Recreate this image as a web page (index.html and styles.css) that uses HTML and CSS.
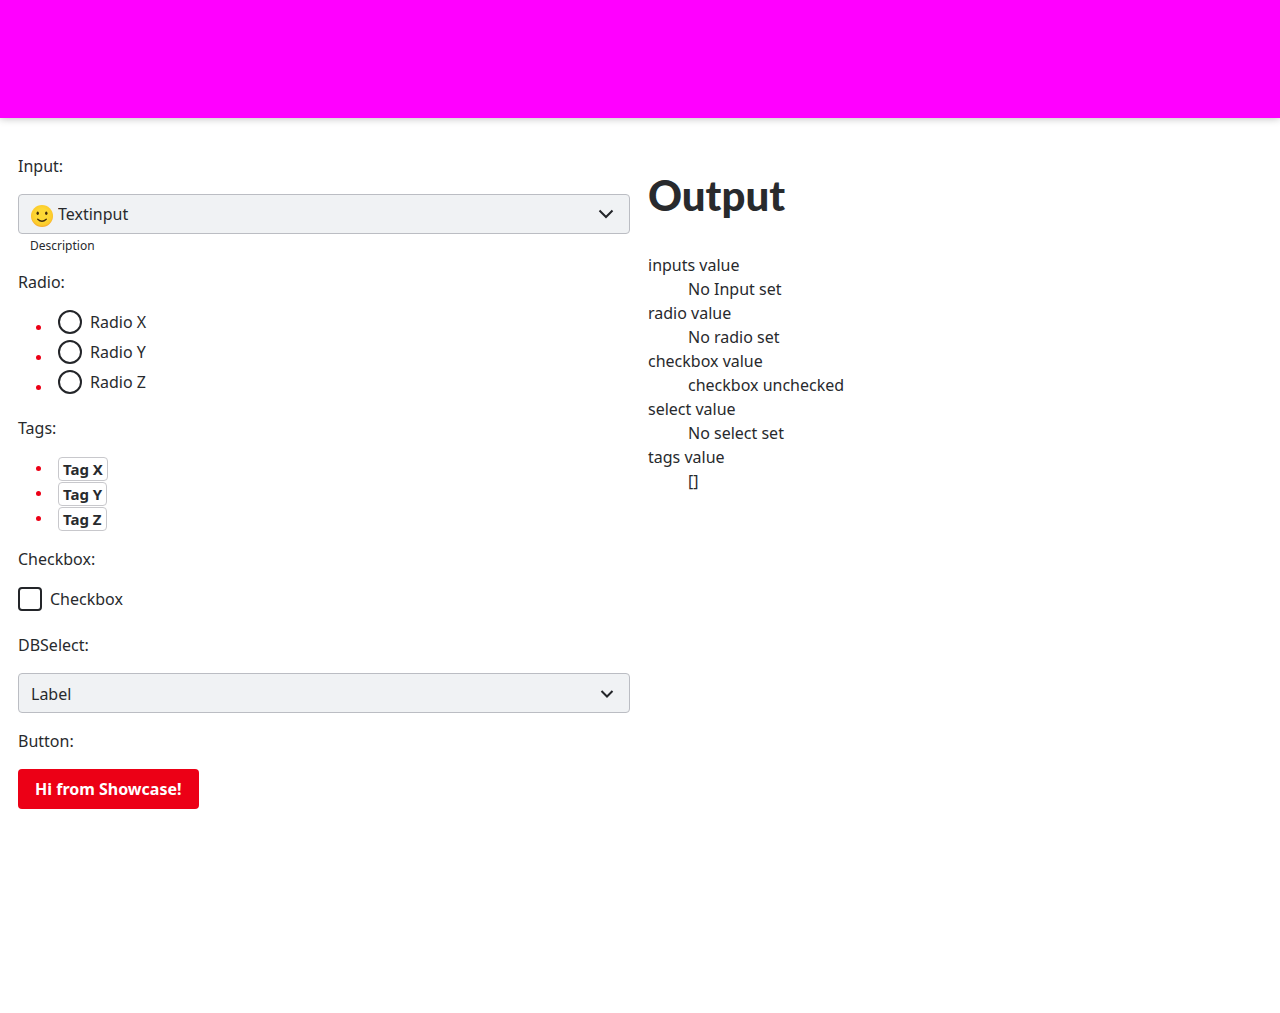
FILE: index.html
```html
<!DOCTYPE html>
<html lang="en">
<head>
<meta charset="utf-8">
<meta name="viewport" content="width=device-width, initial-scale=1">
<title>Showcase</title>
<link rel="stylesheet" href="styles.css">
</head>
<body>
<header class="header"></header>
<main class="page">
  <section class="controls">
    <p>Input:</p>
    <div class="field">
      <label class="box">
        <svg class="emoji" viewBox="0 0 24 24" aria-hidden="true">
          <defs><radialGradient id="face" cx="50%" cy="45%" r="55%"><stop offset="0.5" stop-color="#fdd835"/><stop offset="0.85" stop-color="#fccb2b"/><stop offset="1" stop-color="#f6a52c"/></radialGradient></defs>
          <circle cx="12" cy="12" r="11" fill="url(#face)"/>
          <ellipse cx="7.7" cy="9.3" rx="1.2" ry="1.8" fill="#422b0d"/>
          <ellipse cx="16.3" cy="9.3" rx="1.2" ry="1.8" fill="#422b0d"/>
          <path d="M7.7 15.2Q12 19.200 16.300 15.200" fill="none" stroke="#422b0d" stroke-width="1.300" stroke-linecap="round"/>
        </svg>
        <input class="text" type="text" placeholder="Textinput" aria-label="Textinput" aria-describedby="description">
        <svg class="chevron" viewBox="0 0 24 24" aria-hidden="true"><path d="M5.500 8.500 12 15 18.500 8.500"/></svg>
      </label>
      <small class="description" id="description">Description</small>
    </div>
    <p>Radio:</p>
    <ul class="list radios">
      <li><label class="choice"><input type="radio" name="radio">Radio X</label></li>
      <li><label class="choice"><input type="radio" name="radio">Radio Y</label></li>
      <li><label class="choice"><input type="radio" name="radio">Radio Z</label></li>
    </ul>
    <p>Tags:</p>
    <ul class="list tags">
      <li><button class="tag" type="button">Tag X</button></li>
      <li><button class="tag" type="button">Tag Y</button></li>
      <li><button class="tag" type="button">Tag Z</button></li>
    </ul>
    <p>Checkbox:</p>
    <label class="choice"><input type="checkbox">Checkbox</label>
    <p>DBSelect:</p>
    <div class="box">
      <select class="select" aria-label="Label"><option>Label</option></select>
      <svg class="chevron overlay" viewBox="0 0 24 24" aria-hidden="true"><path d="M6.500 10 12 15.500 17.500 10"/></svg>
    </div>
    <p>Button:</p>
    <button class="button" type="button">Hi from Showcase!</button>
  </section>
  <section class="output">
    <h1>Output</h1>
    <dl>
      <dt>inputs value</dt><dd>No Input set</dd>
      <dt>radio value</dt><dd>No radio set</dd>
      <dt>checkbox value</dt><dd>checkbox unchecked</dd>
      <dt>select value</dt><dd>No select set</dd>
      <dt>tags value</dt><dd>[]</dd>
    </dl>
  </section>
</main>
</body>
</html>
```
FILE: styles.css
```css
* { box-sizing: border-box; }
body {
  margin: 0;
  background: #fff;
  color: #282a2d;
  font: 16px/24px "Noto Sans", sans-serif;
}
input, select, button { margin: 0; font: inherit; color: inherit; }
p { margin: 16px 0; }

.header {
  height: 118px;
  background: #f0f;
  box-shadow: 0 0 8px rgba(0, 0, 0, 0.3);
}
.page {
  display: grid;
  grid-template-columns: 1fr 1fr;
  gap: 18px;
  padding: 20px 20px 20px 18px;
}

.field { display: flex; flex-direction: column; }
.box {
  position: relative;
  display: flex;
  align-items: center;
  height: 40px;
  padding: 0 11px;
  border: 1px solid #bbbdc3;
  border-radius: 4px;
  background: #f0f2f4;
}
.emoji { width: 24px; height: 24px; margin: 4px 4px 0 0; }
.text {
  flex: 1;
  min-width: 0;
  padding: 0;
  border: 0;
  background: none;
  outline: 0;
}
.text::placeholder { color: #282a2d; opacity: 1; }
.chevron {
  width: 24px;
  height: 24px;
  fill: none;
  stroke: #232529;
  stroke-width: 2;
}
.select {
  flex: 1;
  height: 38px;
  padding: 1px 1px 0;
  border: 0;
  background: none;
  appearance: none;
  outline: 0;
}
.overlay { position: absolute; right: 10px; pointer-events: none; }
.description { padding: 4px 12px 0; font-size: 12px; line-height: 16px; }

.list { margin: 16px 0; padding: 0 0 0 18px; list-style: none; }
.list li { display: flex; }
.list li::before {
  content: "";
  flex: none;
  width: 5px;
  height: 5px;
  margin-right: 17px;
  border-radius: 50%;
  background: #ec0016;
}
.radios li::before { margin-top: 15px; }
.tags li { padding-top: 1px; }
.tags li::before { margin-top: 9px; }

.choice { display: flex; gap: 8px; height: 30px; }
.choice input {
  appearance: none;
  width: 24px;
  height: 24px;
  border: 2px solid #232529;
  border-radius: 4px;
  background: #fff;
}
.choice input[type="radio"] { border-radius: 50%; }
.choice input:checked { background: #232529; box-shadow: inset 0 0 0 4px #fff; }
.tag {
  height: 24px;
  padding: 0 4px;
  border: 1px solid #c8c8cc;
  border-radius: 4px;
  background: #fff;
  font-size: 15px;
  line-height: 22px;
  font-weight: 700;
}
.button {
  height: 40px;
  padding: 0 17px;
  border: 0;
  border-radius: 4px;
  background: #ec0016;
  color: #fff;
  font-weight: 700;
}

.output h1 {
  margin: 32px 0;
  font-family: Lato, "Noto Sans", sans-serif;
  font-size: 42px;
  line-height: 51px;
  font-weight: 900;
}
.output dl { margin: 0; }
.output dd { margin: 0 0 0 40px; }
```
